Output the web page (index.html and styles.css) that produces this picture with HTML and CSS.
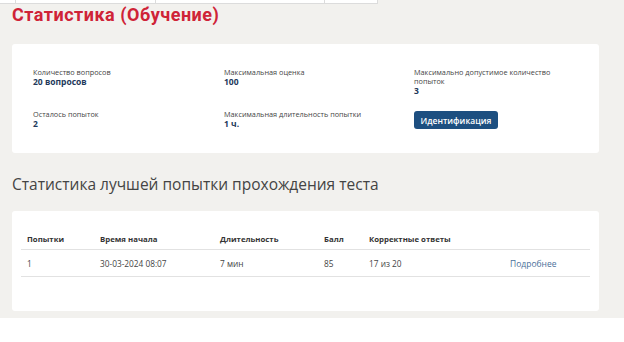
FILE: index.html
```html
<!DOCTYPE html>
<html lang="ru">
<head>
    <meta charset="UTF-8">
    <meta name="viewport" content="width=device-width, initial-scale=1.0">
    <title>Статистика (Обучение)</title>
    <link rel="stylesheet" href="styles.css">
</head>
<body>
    <div class="page">
        <div class="top-strip">
            <span class="cell c1"></span>
            <span class="cell c2"></span>
            <span class="cell c3"></span>
            <span class="cell c4"></span>
        </div>

        <h1 class="title">Статистика (Обучение)</h1>

        <div class="card info-card">
            <div class="info-grid">
                <div class="info-item">
                    <div class="label">Количество вопросов</div>
                    <div class="value">20 вопросов</div>
                </div>
                <div class="info-item">
                    <div class="label">Максимальная оценка</div>
                    <div class="value">100</div>
                </div>
                <div class="info-item">
                    <div class="label">Максимально допустимое количество попыток</div>
                    <div class="value">3</div>
                </div>
                <div class="info-item">
                    <div class="label">Осталось попыток</div>
                    <div class="value">2</div>
                </div>
                <div class="info-item">
                    <div class="label">Максимальная длительность попытки</div>
                    <div class="value">1 ч.</div>
                </div>
                <div class="info-item">
                    <button class="btn">Идентификация</button>
                </div>
            </div>
        </div>

        <h2 class="subtitle">Статистика лучшей попытки прохождения теста</h2>

        <div class="card table-card">
            <table class="attempts">
                <colgroup>
                    <col class="col-num">
                    <col class="col-start">
                    <col class="col-dur">
                    <col class="col-score">
                    <col class="col-correct">
                    <col>
                </colgroup>
                <thead>
                    <tr>
                        <th>Попытки</th>
                        <th>Время начала</th>
                        <th>Длительность</th>
                        <th>Балл</th>
                        <th>Корректные ответы</th>
                        <th></th>
                    </tr>
                </thead>
                <tbody>
                    <tr>
                        <td>1</td>
                        <td>30-03-2024 08:07</td>
                        <td>7 мин</td>
                        <td>85</td>
                        <td>17 из 20</td>
                        <td><a href="#" class="more">Подробнее</a></td>
                    </tr>
                </tbody>
            </table>
        </div>
    </div>
</body>
</html>
```

FILE: styles.css
```css
body {
    margin: 0;
    background: #ffffff;
    font-family: "Open Sans", "Liberation Sans", sans-serif;
    color: #333;
}
.page {
    background-color: #f2f1ee;
    height: 318px;
    padding: 0 25px 0 12px;
    box-sizing: border-box;
    overflow: hidden;
}
.top-strip {
    display: flex;
    height: 3px;
    width: 378px;
    margin-left: -12px;
    background: #fff;
    border-bottom: 1px solid #dcdcdc;
}
.cell {
    border-right: 1px solid #dcdcdc;
}
.c1 { width: 15px; }
.c2 { width: 139px; }
.c3 { width: 169px; }
.c4 { width: 52px; }
.title {
    margin: 0;
    font-family: Roboto, "Open Sans", sans-serif;
    font-size: 18px;
    font-weight: 700;
    color: #cf2337;
    line-height: 22px;
    letter-spacing: 0.5px;
}
.card {
    background: white;
    border-radius: 3px;
}
.info-card {
    margin-top: 18px;
    height: 109px;
    padding: 24px 21px 0;
    box-sizing: border-box;
}
.info-grid {
    display: grid;
    grid-template-columns: 191px 190px 150px;
    row-gap: 14px;
}
.info-item {
    min-height: 19px;
}
.label {
    font-size: 7.3px;
    line-height: 9px;
    color: #444;
}
.value {
    font-size: 8.5px;
    line-height: 10px;
    font-weight: 700;
    color: #22385a;
}
.btn {
    display: block;
    background-color: #1d4f80;
    color: white;
    border: none;
    border-radius: 3px;
    font-family: inherit;
    font-size: 8.5px;
    font-weight: 600;
    width: 84px;
    height: 18px;
    padding: 0;
    margin-top: 1px;
    cursor: pointer;
}
.subtitle {
    margin: 21px 0 0;
    font-size: 15.5px;
    font-weight: 400;
    line-height: 20px;
    color: #444;
}
.table-card {
    margin-top: 17px;
    height: 100px;
    padding: 18px 9px 0;
    box-sizing: border-box;
}
.attempts {
    width: 100%;
    table-layout: fixed;
    border-collapse: collapse;
    font-size: 8.3px;
}
.attempts th {
    text-align: left;
    font-size: 7.8px;
    font-weight: 700;
    color: #333;
    height: 20px;
    padding: 0 0 0 6px;
    border-bottom: 1px solid #e2e2e2;
}
.attempts td {
    height: 26px;
    padding: 0 0 0 6px;
    color: #444;
    border-bottom: 1px solid #e2e2e2;
}
.col-num { width: 73px; }
.col-start { width: 120px; }
.col-dur { width: 104px; }
.col-score { width: 45px; }
.col-correct { width: 141px; }
.more {
    color: #4a6f9a;
    font-size: 8.5px;
    text-decoration: none;
}
```
